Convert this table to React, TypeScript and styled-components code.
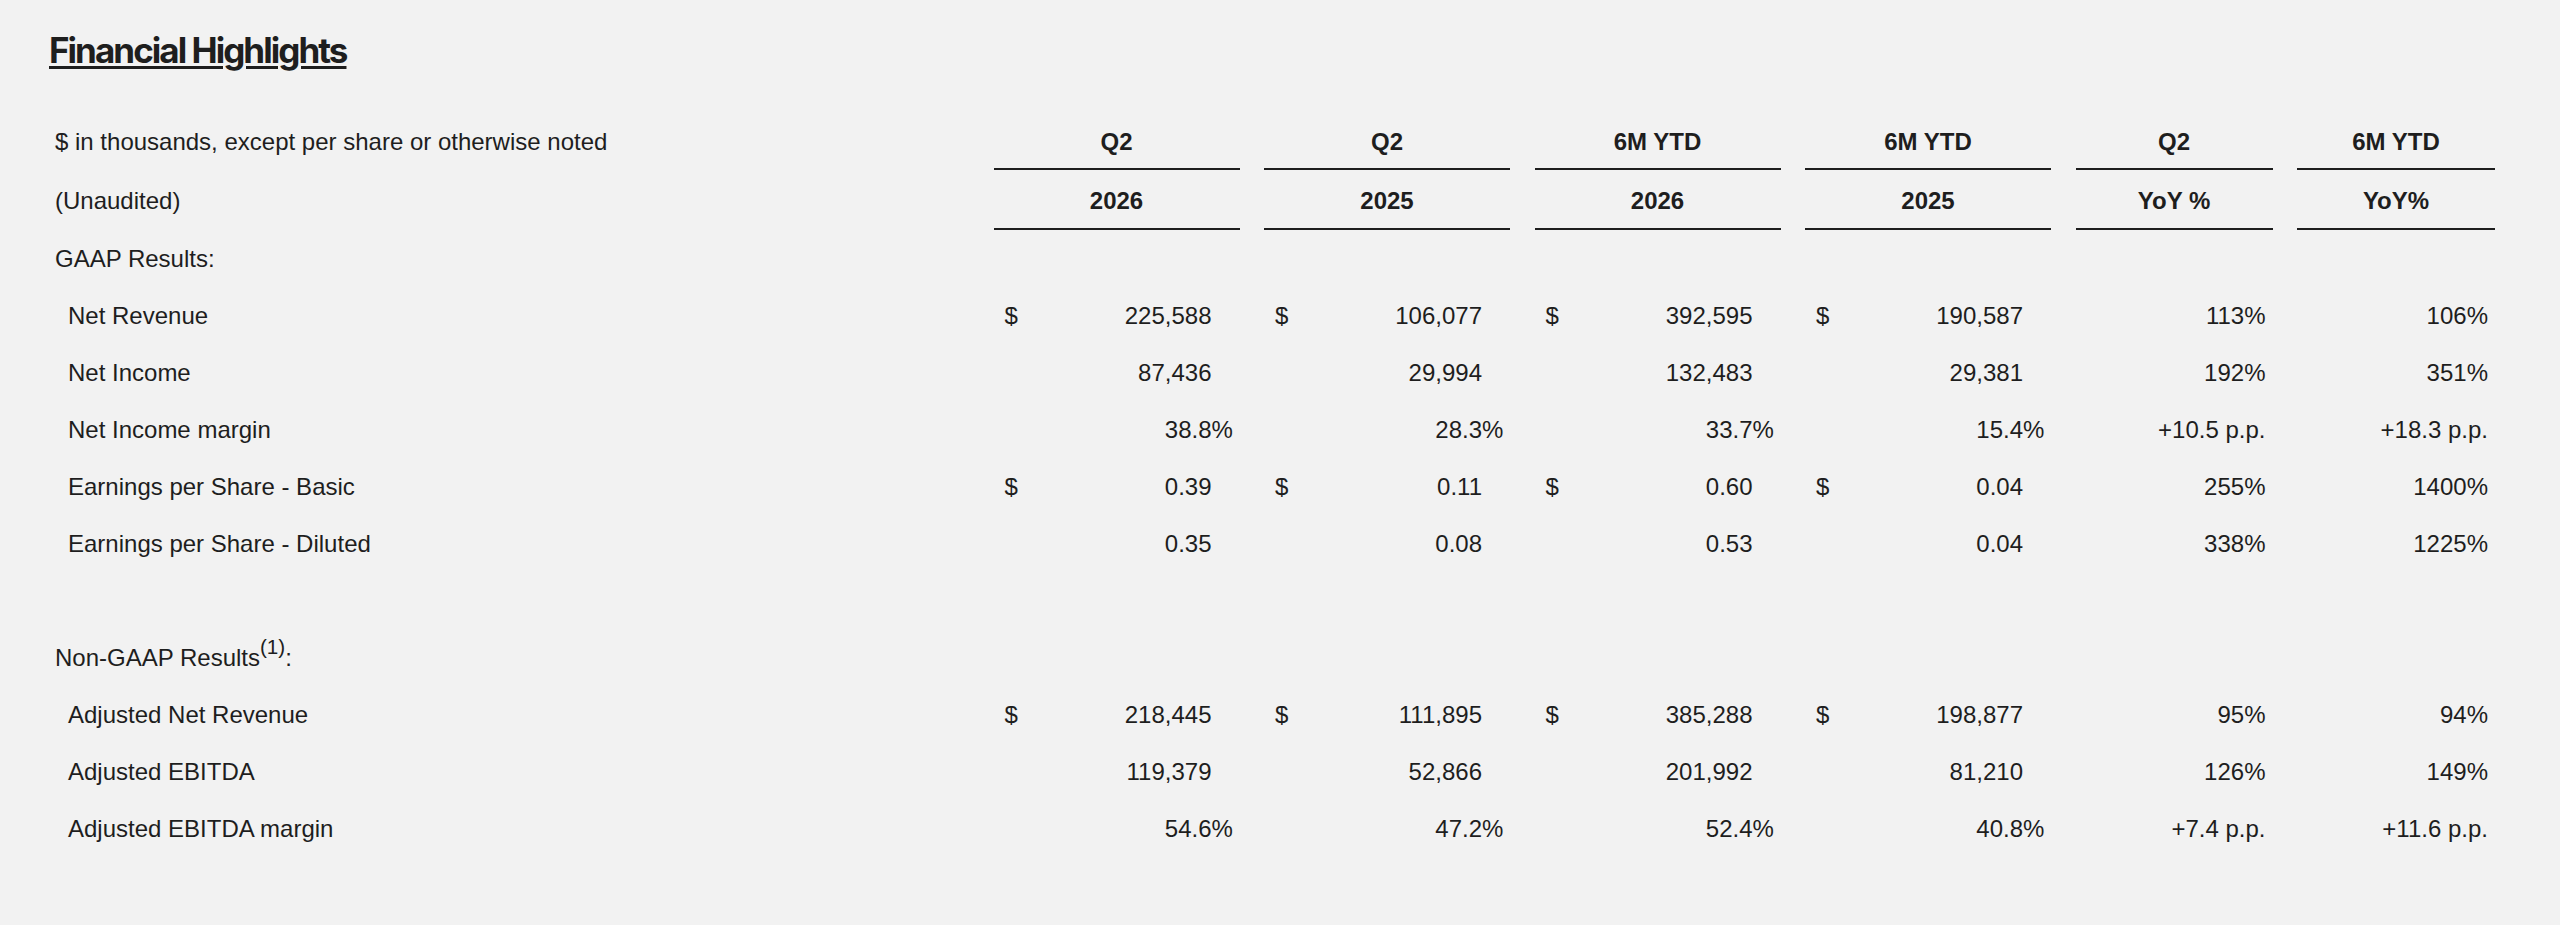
import React from "react";
import styled, { createGlobalStyle } from "styled-components";

const GlobalStyle = createGlobalStyle`
  html, body {
    margin: 0;
    padding: 0;
    background: #f2f2f2;
  }
  body {
    font-family: "Liberation Sans", Arial, sans-serif;
    color: #1e1e1e;
  }
`;

const COLS = "920px repeat(4, 246px) 197px 198px";

const Page = styled.main`
  width: 2560px;
  min-height: 925px;
  box-sizing: border-box;
  padding: 29px 0 0 49px;
  background: #f2f2f2;
`;

const Title = styled.h1`
  margin: 0;
  display: inline-block;
  font-family: Inter, "Noto Sans", sans-serif;
  font-weight: 700;
  font-size: 35px;
  line-height: 42px;
  letter-spacing: -0.056em;
  color: #1e1e1e;
  text-decoration: underline;
  text-decoration-thickness: 3px;
  text-underline-offset: 3px;
`;

const Table = styled.section`
  margin-top: 40px;
  display: flex;
  flex-direction: column;
  font-size: 24px;
`;

const Row = styled.div<{ $head?: number }>`
  display: grid;
  grid-template-columns: ${COLS};
  column-gap: 24.5px;
  height: ${(p) => p.$head ?? 57}px;
  align-items: ${(p) => (p.$head ? "stretch" : "center")};
`;

const HeadLabel = styled.div`
  box-sizing: border-box;
  padding: 4px 0 0 6px;
  line-height: 53px;
  white-space: nowrap;
`;

const HeadCell = styled.div`
  box-sizing: border-box;
  padding-top: 4px;
  line-height: 53px;
  text-align: center;
  font-weight: 700;
  border-bottom: 2px solid #1e1e1e;
`;

const Label = styled.div<{ $indent?: boolean }>`
  padding-left: ${(p) => (p.$indent ? 19 : 6)}px;
  white-space: nowrap;
`;

const Sup = styled.sup`
  font-size: 0.86em;
  line-height: 0;
  vertical-align: 0.58em;
`;

const ValueCell = styled.div`
  display: flex;
  align-items: baseline;
  padding: 0 7px 0 11px;
  white-space: nowrap;
`;

const Dollar = styled.span`
  flex: none;
`;

const Amount = styled.span`
  margin-left: auto;
`;

const Suffix = styled.span`
  flex: none;
  width: 21px;
  text-align: left;
`;

const YoyCell = styled.div`
  text-align: right;
  padding-right: 7px;
  white-space: nowrap;
`;

type Val = { d?: boolean; v: string; pct?: boolean };
type DataRow = {
  label: string;
  vals: Val[];
  yoy: string[];
};

const num = (v: string, d = false): Val => ({ v, d });
const pct = (v: string): Val => ({ v, pct: true });

const gaap: DataRow[] = [
  {
    label: "Net Revenue",
    vals: [num("225,588", true), num("106,077", true), num("392,595", true), num("190,587", true)],
    yoy: ["113%", "106%"],
  },
  {
    label: "Net Income",
    vals: [num("87,436"), num("29,994"), num("132,483"), num("29,381")],
    yoy: ["192%", "351%"],
  },
  {
    label: "Net Income margin",
    vals: [pct("38.8"), pct("28.3"), pct("33.7"), pct("15.4")],
    yoy: ["+10.5 p.p.", "+18.3 p.p."],
  },
  {
    label: "Earnings per Share - Basic",
    vals: [num("0.39", true), num("0.11", true), num("0.60", true), num("0.04", true)],
    yoy: ["255%", "1400%"],
  },
  {
    label: "Earnings per Share - Diluted",
    vals: [num("0.35"), num("0.08"), num("0.53"), num("0.04")],
    yoy: ["338%", "1225%"],
  },
];

const nonGaap: DataRow[] = [
  {
    label: "Adjusted Net Revenue",
    vals: [num("218,445", true), num("111,895", true), num("385,288", true), num("198,877", true)],
    yoy: ["95%", "94%"],
  },
  {
    label: "Adjusted EBITDA",
    vals: [num("119,379"), num("52,866"), num("201,992"), num("81,210")],
    yoy: ["126%", "149%"],
  },
  {
    label: "Adjusted EBITDA margin",
    vals: [pct("54.6"), pct("47.2"), pct("52.4"), pct("40.8")],
    yoy: ["+7.4 p.p.", "+11.6 p.p."],
  },
];

const head1 = ["Q2", "Q2", "6M YTD", "6M YTD", "Q2", "6M YTD"];
const head2 = ["2026", "2025", "2026", "2025", "YoY %", "YoY%"];

const Empty = () => (
  <>
    <div />
    <div />
    <div />
    <div />
    <div />
    <div />
  </>
);

const DataLine: React.FC<{ row: DataRow }> = ({ row }) => (
  <Row>
    <Label $indent>{row.label}</Label>
    {row.vals.map((v, i) => (
      <ValueCell key={i}>
        <Dollar>{v.d ? "$" : ""}</Dollar>
        <Amount>{v.v}</Amount>
        <Suffix>{v.pct ? "%" : ""}</Suffix>
      </ValueCell>
    ))}
    {row.yoy.map((y, i) => (
      <YoyCell key={i}>{y}</YoyCell>
    ))}
  </Row>
);

export default function App() {
  return (
    <>
      <GlobalStyle />
      <Page>
        <Title>Financial Highlights</Title>
        <Table>
          <Row $head={59}>
            <HeadLabel>$ in thousands, except per share or otherwise noted</HeadLabel>
            {head1.map((h, i) => (
              <HeadCell key={i}>{h}</HeadCell>
            ))}
          </Row>
          <Row $head={60}>
            <HeadLabel>(Unaudited)</HeadLabel>
            {head2.map((h, i) => (
              <HeadCell key={i}>{h}</HeadCell>
            ))}
          </Row>
          <Row>
            <Label>GAAP Results:</Label>
            <Empty />
          </Row>
          {gaap.map((r) => (
            <DataLine key={r.label} row={r} />
          ))}
          <Row>
            <Label />
            <Empty />
          </Row>
          <Row>
            <Label>
              Non-GAAP Results<Sup>(1)</Sup>:
            </Label>
            <Empty />
          </Row>
          {nonGaap.map((r) => (
            <DataLine key={r.label} row={r} />
          ))}
        </Table>
      </Page>
    </>
  );
}
